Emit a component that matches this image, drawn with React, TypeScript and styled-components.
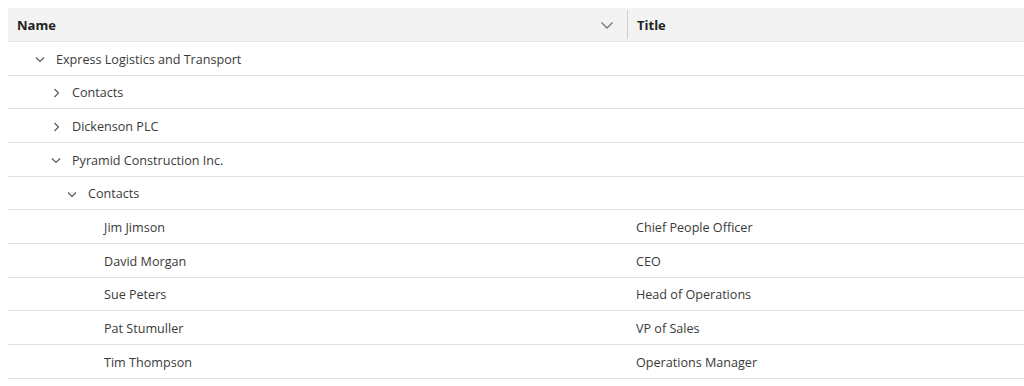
import styled, { createGlobalStyle } from "styled-components";

const GlobalStyle = createGlobalStyle`
  body {
    margin: 8px 0 0 8px;
    background: #ffffff;
    font-family: "Open Sans", "Noto Sans", sans-serif;
    overflow: hidden;
  }
`;

type Node = {
  name: string;
  title?: string;
  level: number;
  expanded?: boolean;
  leaf?: boolean;
};

const rows: Node[] = [
  { name: "Express Logistics and Transport", level: 0, expanded: true },
  { name: "Contacts", level: 1, expanded: false },
  { name: "Dickenson PLC", level: 1, expanded: false },
  { name: "Pyramid Construction Inc.", level: 1, expanded: true },
  { name: "Contacts", level: 2, expanded: true },
  { name: "Jim Jimson", title: "Chief People Officer", level: 3, leaf: true },
  { name: "David Morgan", title: "CEO", level: 3, leaf: true },
  { name: "Sue Peters", title: "Head of Operations", level: 3, leaf: true },
  { name: "Pat Stumuller", title: "VP of Sales", level: 3, leaf: true },
  { name: "Tim Thompson", title: "Operations Manager", level: 3, leaf: true },
];

const Chevron = ({ open }: { open: boolean }) => (
  <svg width="12" height="12" viewBox="0 0 12 12" fill="none">
    {open ? (
      <path d="M2 4.5 L6 8.5 L10 4.5" stroke="#555" strokeWidth="1.1" />
    ) : (
      <path d="M4.5 2 L8.5 6 L4.5 10" stroke="#555" strokeWidth="1.1" />
    )}
  </svg>
);

export default function App() {
  return (
    <>
      <GlobalStyle />
      <Grid>
        <HeaderRow>
          <HeaderCell>
            Name
            <SortIcon>
              <svg width="14" height="14" viewBox="0 0 14 14" fill="none">
                <path d="M1.5 4.5 L7 10 L12.5 4.5" stroke="#777" strokeWidth="1.3" />
              </svg>
            </SortIcon>
          </HeaderCell>
          <HeaderCell $divider>Title</HeaderCell>
        </HeaderRow>
        {rows.map((r, i) => (
          <Row key={i}>
            <NameCell $level={r.level}>
              <Toggle>{!r.leaf && <Chevron open={!!r.expanded} />}</Toggle>
              {r.name}
            </NameCell>
            <Cell>{r.title}</Cell>
          </Row>
        ))}
      </Grid>
    </>
  );
}

const Grid = styled.div`
  width: 1016px;
  display: flex;
  flex-direction: column;
  font-size: 12.6px;
  color: #3a3a3a;
`;

const HeaderRow = styled.div`
  display: grid;
  grid-template-columns: 619px 1fr;
  height: 34px;
  background: #f3f3f3;
  border-bottom: 1px solid #e4e4e4;
  box-sizing: border-box;
  font-size: 13px;
`;

const HeaderCell = styled.div<{ $divider?: boolean }>`
  display: flex;
  align-items: center;
  justify-content: space-between;
  padding: 0 8px 0 9px;
  font-weight: 700;
  color: #222;
  border-left: ${(p) => (p.$divider ? "1px solid #cfcfcf" : "none")};
  margin: ${(p) => (p.$divider ? "2px 0" : "0")};
`;

const SortIcon = styled.span`
  display: flex;
  margin-right: 5px;
`;

const Row = styled.div`
  display: grid;
  grid-template-columns: 619px 1fr;
  height: 33.67px;
  padding-top: 2px;
  box-sizing: border-box;
  border-bottom: 1px solid #e1e1e1;
  align-items: center;
`;

const NameCell = styled.div<{ $level: number }>`
  display: flex;
  align-items: center;
  padding-left: ${(p) => 26 + p.$level * 16}px;
  white-space: nowrap;
`;

const Toggle = styled.span`
  display: inline-flex;
  width: 12px;
  height: 12px;
  margin-right: 10px;
`;

const Cell = styled.div`
  padding-left: 9px;
  white-space: nowrap;
`;
